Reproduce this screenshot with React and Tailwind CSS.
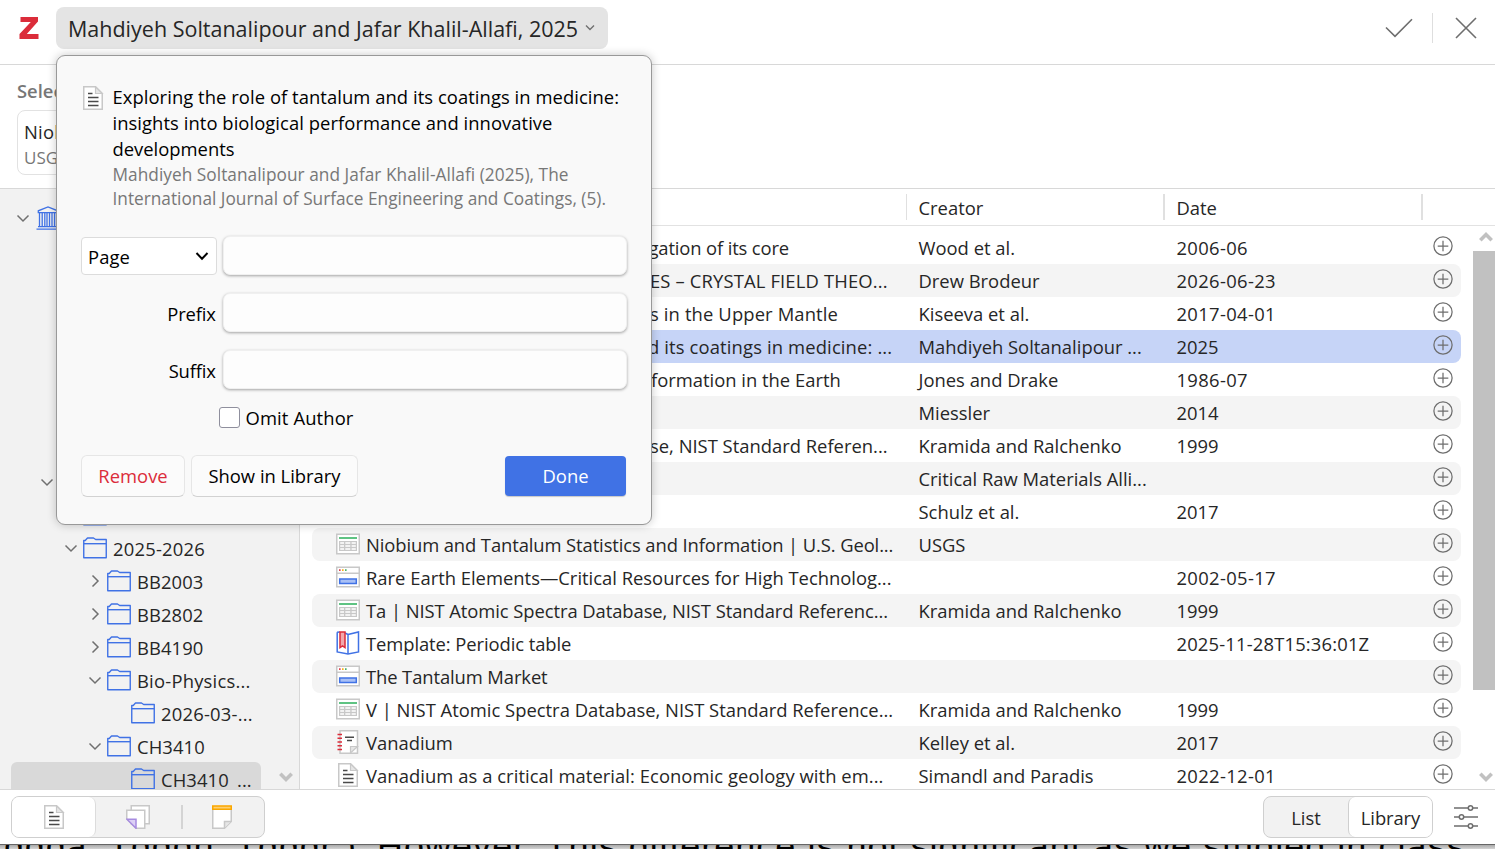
import React, { useState } from 'react';

const items = [
  { title: 'igation of its core', offset: 'pl-[278px] tracking-[-0.14px]', creator: 'Wood et al.', date: '2006-06' },
  { title: 'ES – CRYSTAL FIELD THEO...', offset: 'pl-[284px] tracking-[0.15px]', creator: 'Drew Brodeur', date: '2026-06-23' },
  { title: 's in the Upper Mantle', offset: 'pl-[284px] tracking-[0.13px]', creator: 'Kiseeva et al.', date: '2017-04-01' },
  { title: 'd its coatings in medicine: ...', offset: 'pl-[282px] tracking-[0.14px]', creator: 'Mahdiyeh Soltanalipour ...', date: '2025', selected: true },
  { title: 'formation in the Earth', offset: 'pl-[285px]', creator: 'Jones and Drake', date: '1986-07' },
  { title: '', creator: 'Miessler', date: '2014' },
  { title: 'se, NIST Standard Referen...', offset: 'pl-[284px]', creator: 'Kramida and Ralchenko', date: '1999' },
  { title: '', creator: 'Critical Raw Materials Alli...', date: '' },
  { title: '', creator: 'Schulz et al.', date: '2017' },
  { icon: 'dataset', title: 'Niobium and Tantalum Statistics and Information | U.S. Geol...', offset: 'tracking-[-0.1px]', creator: 'USGS', date: '' },
  { icon: 'webpage', title: 'Rare Earth Elements—Critical Resources for High Technolog...', creator: '', date: '2002-05-17' },
  { icon: 'dataset', title: 'Ta | NIST Atomic Spectra Database, NIST Standard Referenc...', offset: 'tracking-[-0.07px]', creator: 'Kramida and Ralchenko', date: '1999' },
  { icon: 'book', title: 'Template: Periodic table', offset: 'tracking-[-0.08px]', creator: '', date: '2025-11-28T15:36:01Z' },
  { icon: 'webpage', title: 'The Tantalum Market', offset: 'tracking-[-0.1px]', creator: '', date: '' },
  { icon: 'dataset', title: 'V | NIST Atomic Spectra Database, NIST Standard Reference...', creator: 'Kramida and Ralchenko', date: '1999' },
  { icon: 'report', title: 'Vanadium', creator: 'Kelley et al.', date: '2017' },
  { icon: 'article', title: 'Vanadium as a critical material: Economic geology with em...', offset: 'tracking-[0.06px]', creator: 'Simandl and Paradis', date: '2022-12-01' },
];

const collections = [
  { indent: 'pl-[11px]', icon: 'library', open: true },
  {}, {}, {}, {}, {}, {}, {},
  { indent: 'pl-[35px]', open: true },
  { indent: 'pl-[59px]', icon: 'folder' },
  { indent: 'pl-[59px]', icon: 'folder', open: true, label: '2025-2026' },
  { indent: 'pl-[83px]', icon: 'folder', open: false, label: 'BB2003' },
  { indent: 'pl-[83px]', icon: 'folder', open: false, label: 'BB2802' },
  { indent: 'pl-[83px]', icon: 'folder', open: false, label: 'BB4190' },
  { indent: 'pl-[83px]', icon: 'folder', open: true, label: 'Bio-Physics...' },
  { indent: 'pl-[107px]', icon: 'folder', label: '2026-03-...' },
  { indent: 'pl-[83px]', icon: 'folder', open: true, label: 'CH3410' },
  { indent: 'pl-[107px]', icon: 'folder', label: 'CH3410_...', selected: true },
];

const ArticleIcon = () => (
  <svg width="24" height="24" viewBox="0 0 24 24" fill="none" className="shrink-0">
    <path d="M2.75.75H14.5L21.25 7.5V23.25H2.75Z" fill="#fff" stroke="#c8c8c8" strokeWidth="1.5" />
    <path d="M14.5.75V7.5H21.25Z" fill="#e6e6e6" stroke="#c8c8c8" strokeWidth="1.2" />
    <path d="M7 7.5H11.5M7 11.5H17.5M7 15.5H17.5M7 19.5H17.5" stroke="#4a4a4a" strokeWidth="1.5" />
  </svg>
);

const DatasetIcon = () => (
  <svg width="24" height="24" viewBox="0 0 24 24" fill="none" className="shrink-0">
    <rect x=".75" y="2.25" width="22.5" height="19.5" fill="#fff" stroke="#c8c8c8" strokeWidth="1.5" />
    <rect x="3" y="5" width="18" height="2" fill="#5fc383" />
    <path d="M3 9H21V19H3Z" fill="#c8c8c8" />
    <path d="M4.2 11H8M9.3 11H14.3M15.6 11H19.8M4.2 14H8M9.3 14H14.3M15.6 14H19.8M4.2 17H8M9.3 17H14.3M15.6 17H19.8" stroke="#fff" strokeWidth="1.4" />
  </svg>
);

const WebpageIcon = () => (
  <svg width="24" height="24" viewBox="0 0 24 24" fill="none" className="shrink-0">
    <rect x=".75" y="2.25" width="22.5" height="19.5" fill="#fff" stroke="#c8c8c8" strokeWidth="1.5" />
    <path d="M1 8.25H23" stroke="#c8c8c8" strokeWidth="1.5" />
    <rect x="3" y="4.3" width="1.6" height="1.6" fill="#db2c3a" />
    <rect x="6" y="4.3" width="1.6" height="1.6" fill="#faa700" />
    <rect x="9" y="4.3" width="1.6" height="1.6" fill="#39a85b" />
    <rect x="3.7" y="14" width="16.6" height="4.5" fill="#a9c0f5" stroke="#4072e5" strokeWidth="1.5" />
  </svg>
);

const BookIcon = () => (
  <svg width="24" height="24" viewBox="0 0 24 24" fill="none" className="shrink-0">
    <path d="M1 1.3 4 .9M12 3.5 22.5.9V21L12 23 1.2 21V1.3" fill="#fff" stroke="#4072e5" strokeWidth="1.5" />
    <path d="M12 3.5V23M9 2 12 3.5" stroke="#4072e5" strokeWidth="1.5" />
    <path d="M4 .9H9V16.5L6.5 14.8 4 16.5Z" fill="#f2a8ad" stroke="#db2c3a" strokeWidth="1.5" />
  </svg>
);

const ReportIcon = () => (
  <svg width="24" height="24" viewBox="0 0 24 24" fill="none" className="shrink-0">
    <path d="M4 .75H21.5V23.25H4Z" fill="#fff" stroke="#c8c8c8" strokeWidth="1.5" />
    <path d="M14.5 23V16.5H21.5Z" fill="#e6e6e6" stroke="#c8c8c8" strokeWidth="1.2" />
    <path d="M1.5 4.5H6M1.5 8.2H6M1.5 12H6M1.5 15.8H6M1.5 19.5H6" stroke="#db2c3a" strokeWidth="1.5" />
    <path d="M9 7.3H18M11 10.5H16" stroke="#4a4a4a" strokeWidth="1.5" />
  </svg>
);

const itemIcons = {
  article: ArticleIcon,
  dataset: DatasetIcon,
  webpage: WebpageIcon,
  book: BookIcon,
  report: ReportIcon,
};

const FolderIcon = () => (
  <svg width="24" height="24" viewBox="0 0 24 24" fill="none" stroke="#4072e5" strokeWidth="1.4" strokeLinejoin="round" className="shrink-0">
    <path d="M.75 21.7V4.5H2.2L4.5 2H10.5L12.7 3.5H23.25V21.7Z" />
    <path d="M.75 7.7H23.25" />
  </svg>
);

const LibraryIcon = () => (
  <svg width="24" height="24" viewBox="0 0 24 24" fill="none" stroke="#4072e5" strokeWidth="1.3" className="ml-px shrink-0">
    <path d="M2.3 6.7V4.8L12 .9 21.7 4.8V6.7ZM2 20.6H22M.5 23.2H23.5" />
    <path d="M3.5 7V20.3M6.2 7V20.3M8.8 7V20.3M11 7V20.3M13.5 7V20.3M16 7V20.3M18.5 7V20.3M20.5 7V20.3" />
  </svg>
);

const Chevron = ({ open }) => (
  <svg width="24" height="24" viewBox="0 0 24 24" fill="none" stroke="#707070" strokeWidth="1.5" className="shrink-0">
    <path d={open ? 'M6.5 9.5 12 15 17.5 9.5' : 'M9.5 6.5 15 12 9.5 17.5'} />
  </svg>
);

const PlusCircle = () => (
  <svg width="20" height="20" viewBox="0 0 20 20" fill="none" stroke="#6e6e6e" strokeWidth="1.25">
    <circle cx="10" cy="10" r="9.1" />
    <path d="M10 4.7V15.3M4.7 10H15.3" />
  </svg>
);

const ScrollArrow = ({ up }) => (
  <svg width="14" height="12" viewBox="0 0 14 12" fill="none" stroke="#c1c1c1" strokeWidth="3.6">
    <path d={up ? 'M1.3 9.3 7 3.6 12.7 9.3' : 'M1.3 2.7 7 8.4 12.7 2.7'} />
  </svg>
);

const Field = ({ label, children }) => (
  <div className="flex h-[41px] items-center">
    <div className="flex w-[136px] justify-end pr-px tracking-[-0.15px]">{children || <label>{label}</label>}</div>
    <input className="mb-[3px] ml-[6px] h-[39px] w-[405px] rounded-[7px] border border-[#f0f0f0] bg-[#fdfdfd] px-2 shadow-[0_1px_3px_rgba(0,0,0,0.35)] outline-none" />
  </div>
);

const CitationPopup = () => {
  const [omitAuthor, setOmitAuthor] = useState(false);

  return (
    <div className="absolute left-[56px] top-[55px] z-10 h-[470px] w-[596px] rounded-[9px] border border-[#999] bg-[#f9f9f9] px-6 pt-[28px] text-black shadow-[0_0_10px_rgba(0,0,0,0.22)]">
      <div className="flex h-[128px]">
        <div className="mt-[2px] w-[31.5px] shrink-0"><ArticleIcon /></div>
        <div className="whitespace-nowrap">
          <div className="leading-[26px] tracking-[0.06px]">
            <div>Exploring the role of tantalum and its coatings in medicine:</div>
            <div>insights into biological performance and innovative</div>
            <div className="tracking-normal">developments</div>
          </div>
          <div className="pt-px text-[17.25px] leading-[24.2px] text-[#777]">
            <div className="tracking-[0.04px]">Mahdiyeh Soltanalipour and Jafar Khalil-Allafi (2025), The</div>
            <div>International Journal of Surface Engineering and Coatings, (5).</div>
          </div>
        </div>
      </div>

      <div className="mt-[24px] flex flex-col gap-4">
        <Field>
          <button className="-mr-px mb-[2px] flex h-[38px] w-[136px] items-center justify-between rounded border border-[#dcdcdc] bg-white pl-[6px] pr-[7px] tracking-[0.1px]">
            <span className="pt-[2px]">Page</span>
            <svg width="14" height="10" viewBox="0 0 14 10" fill="none" stroke="#000" strokeWidth="2">
              <path d="M1.5 2 7 7.8 12.5 2" />
            </svg>
          </button>
        </Field>
        <Field label="Prefix" />
        <Field label="Suffix" />
      </div>

      <label className="mt-[13px] flex h-[28px] items-center pl-[138px] tracking-[0.12px]">
        <input type="checkbox" className="sr-only" checked={omitAuthor} onChange={() => setOmitAuthor(!omitAuthor)} />
        <span className="mr-[5.5px] mb-px h-[21px] w-[21px] rounded-[3px] border border-[#8f8f9d] bg-white" />
        Omit Author
      </label>

      <div className="mt-[23px] flex items-center">
        <button className="h-[42px] w-[104px] rounded-md border border-[#e6e6e6] border-b-[#d2d2d2] bg-[#fbfbfb] text-[#db2c3a]">Remove</button>
        <button className="ml-[6px] h-[42px] w-[167px] rounded-md border border-[#e6e6e6] border-b-[#d2d2d2] bg-[#fbfbfb]">Show in Library</button>
        <button className="ml-auto mr-[1px] h-[40px] w-[121px] rounded bg-[#4072e5] text-white shadow-[0_1px_1px_rgba(0,0,0,0.2)]">Done</button>
      </div>
    </div>
  );
};

const Sidebar = () => (
  <div className="flex w-[300px] shrink-0 overflow-hidden border-r border-[#d8d8d8] bg-[#f2f2f2]">
    <div className="w-[250px] ml-[11px] pt-3">
      {collections.map((row, i) => (
        <div key={i} className={`h-[33px] rounded-md ${row.selected ? 'bg-[#d9d9d9]' : ''}`}>
          {row.indent && (
            <div className={`-ml-[11px] flex h-[33px] items-center whitespace-nowrap ${row.indent}`}>
              <div className="h-6 w-6">{row.open !== undefined && <Chevron open={row.open} />}</div>
              <div className="mr-[6px] h-6 w-6">
                {row.icon === 'folder' && <FolderIcon />}
                {row.icon === 'library' && <LibraryIcon />}
              </div>
              <span className={row.label?.includes('-') ? 'pt-[2px] tracking-[0.22px]' : 'pt-[2px] tracking-[0.1px]'}>{row.label}</span>
            </div>
          )}
        </div>
      ))}
    </div>
    <div className="mt-auto ml-[18px] mb-[6px]"><ScrollArrow /></div>
  </div>
);

const dateTracking = (date) => {
  if (date.includes('T')) return 'tracking-[0.17px]';
  return date.includes('-') ? 'tracking-[0.34px]' : '';
};

const ItemRow = ({ item, striped }) => {
  const Icon = itemIcons[item.icon];
  const bg = item.selected ? 'bg-[#c6d4f7]' : striped ? 'bg-[#f4f4f4]' : '';

  return (
    <div className={`flex h-[33px] items-center rounded-lg whitespace-nowrap ${bg}`}>
      <div className="flex w-[606.5px] items-center pl-6">
        <div className="mr-[6px] h-6 w-6">{Icon && <Icon />}</div>
        <span className={item.offset || ''}>{item.title}</span>
      </div>
      <span className="w-[258px]">{item.creator}</span>
      <span className={`flex-1 ${dateTracking(item.date)}`}>{item.date}</span>
      <button className="mr-2 mb-[3px]"><PlusCircle /></button>
    </div>
  );
};

const ItemTable = () => (
  <div className="flex flex-1 flex-col overflow-hidden bg-white">
    <div className="flex h-[37px] shrink-0 items-center border-b border-[#e2e2e2]">
      <div className="w-[607px] h-[26px] border-r border-[#e0e0e0]" />
      <div className="w-[258px] h-[26px] border-r-2 border-[#e0e0e0] pl-[11.5px] leading-[27px]">Creator</div>
      <div className="w-[258px] h-[26px] border-r-2 border-[#e0e0e0] pl-[11.5px] leading-[27px]">Date</div>
    </div>
    <div className="flex min-h-0 flex-1">
      <div className="w-[1149px] ml-3 pt-[5px]">
        {items.map((item, i) => (
          <ItemRow key={i} item={item} striped={i % 2 === 1} />
        ))}
      </div>
      <div className="ml-3 flex h-full w-[22px] flex-col items-center justify-between">
        <div className="flex h-[25px] items-center pb-[4px] pl-[3px]"><ScrollArrow up /></div>
        <div className="h-[439px] w-full bg-[#c1c1c1]" />
        <div className="mt-auto mb-[6px] pl-[3px]"><ScrollArrow /></div>
      </div>
    </div>
  </div>
);

const BottomBar = () => (
  <div className="flex h-[55px] shrink-0 items-center border-t border-[#d8d8d8] bg-white pl-[11px] pr-4">
    <div className="flex h-[42px] w-[254px] items-center rounded-lg border border-[#cfcfcf] bg-[#f2f2f2]">
      <button className="flex h-full w-[84px] items-center justify-center rounded-[7px] border-r border-[#dcdcdc] bg-white"><ArticleIcon /></button>
      <button className="flex w-[85px] justify-center pr-[2px]">
        <svg width="24" height="24" viewBox="0 0 24 24" fill="none" strokeWidth="1.5">
          <path d="M5.25.75H23.25V18.75H5.25Z" fill="#fff" stroke="#c8c8c8" />
          <path d="M.75 5.25H18.75V23.25H10L.75 14Z" fill="#fff" stroke="#c8c8c8" />
          <path d="M.9 14.2H10V23.2Z" fill="#dcd0f5" stroke="#a78be0" />
        </svg>
      </button>
      <div className="h-6 w-[2px] bg-[#d4d4d4]" />
      <button className="flex flex-1 justify-center pr-[3px]">
        <svg width="24" height="24" viewBox="0 0 24 24" fill="none" strokeWidth="1.5">
          <path d="M2.75 4V23.25H14.5L21.25 16.5V4" fill="#fff" stroke="#c8c8c8" />
          <path d="M14.5 23V16.5H21" fill="#e6e6e6" stroke="#c8c8c8" />
          <path d="M2.75.9H21.25V4.2H2.75Z" fill="#fdcf70" stroke="#faa700" />
        </svg>
      </button>
    </div>

    <div className="ml-auto flex h-[42px] w-[170px] rounded-lg border border-[#cfcfcf] bg-[#f2f2f2]">
      <button className="w-[84px] pt-px">List</button>
      <button className="flex-1 rounded-[7px] border-l border-[#cfcfcf] bg-white pt-px tracking-[-0.1px]">Library</button>
    </div>
    <svg width="26" height="26" viewBox="0 0 26 26" fill="none" stroke="#6e6e6e" strokeWidth="1.5" className="ml-5">
      <path d="M1 4H15M20 4H25M1 13H6M11 13H25M1 22H15M20 22H25" />
      <circle cx="17.5" cy="4" r="2.2" />
      <circle cx="8.5" cy="13" r="2.2" />
      <circle cx="17.5" cy="22" r="2.2" />
    </svg>
  </div>
);

export default function App() {
  return (
    <div className="relative flex h-[849px] w-[1495px] flex-col overflow-hidden bg-white font-['Open_Sans',sans-serif] text-[18.4px] text-[#262626]">
      <header className="flex h-[65px] shrink-0 items-center border-b border-[#d8d8d8] pb-2">
        <svg width="20" height="22" viewBox="0 0 20 22" className="ml-[18.5px]">
          <path d="M1.5 0H19V4.5L7.8 17H19.5V22H.5V17L11.8 5H1.5Z" fill="#db2c3a" />
        </svg>
        <button className="ml-[17.5px] flex h-[42px] w-[552px] items-center rounded-lg bg-[#e4e4e4] pl-[12px] text-[21.5px] whitespace-nowrap">
          <span className="pt-[3px]">Mahdiyeh Soltanalipour and Jafar Khalil-Allafi, 2025</span>
          <svg width="10" height="8" viewBox="0 0 10 8" fill="none" stroke="#707070" strokeWidth="1.4" className="ml-[7px]">
            <path d="M1 1.5 5 5.5 9 1.5" />
          </svg>
        </button>
        <svg width="28" height="20" viewBox="0 0 28 20" fill="none" stroke="#6e6e6e" strokeWidth="1.6" className="ml-auto">
          <path d="M1 9.5 10 18.3 27 1.2" />
        </svg>
        <div className="ml-[19px] h-[30px] w-px bg-[#dedede]" />
        <svg width="22" height="22" viewBox="0 0 22 22" fill="none" stroke="#6e6e6e" strokeWidth="1.6" className="mx-[22px] mr-[18px]">
          <path d="M1 1 21 21M21 1 1 21" />
        </svg>
      </header>

      <section className="flex h-[124px] shrink-0 flex-col border-b border-[#d8d8d8] pl-[17px] pt-[12px]">
        <div className="font-semibold leading-[28px] text-[#777]">Selected</div>
        <div className="mt-[5px] h-[65px] w-[300px] rounded-lg border border-[#e2e2e2] pl-[6px] pt-[8px]">
          <div className="leading-[26px] tracking-[0.25px]">Niobium</div>
          <div className="text-[17px] leading-[25px] text-[#777]">USGS</div>
        </div>
      </section>

      <main className="flex min-h-0 flex-1">
        <Sidebar />
        <ItemTable />
      </main>

      <BottomBar />

      {/* sliver of the document behind the dialog */}
      <div className="h-[5px] shrink-0 overflow-hidden border-t border-[#666] bg-linear-to-b from-[#aaa] to-[#d4d4d4]">
        <div className="-mt-[18px] flex pl-1 font-['Liberation_Sans',sans-serif] text-[36px] leading-[40px] tracking-[1.02px] whitespace-pre text-black">
          <span className="w-[373px] shrink-0 tracking-[0.8px]">ggga  Tgggn  Tgggr )</span>
          <span>However, This difference is not significant as we studied in class</span>
        </div>
      </div>

      <CitationPopup />
    </div>
  );
}
